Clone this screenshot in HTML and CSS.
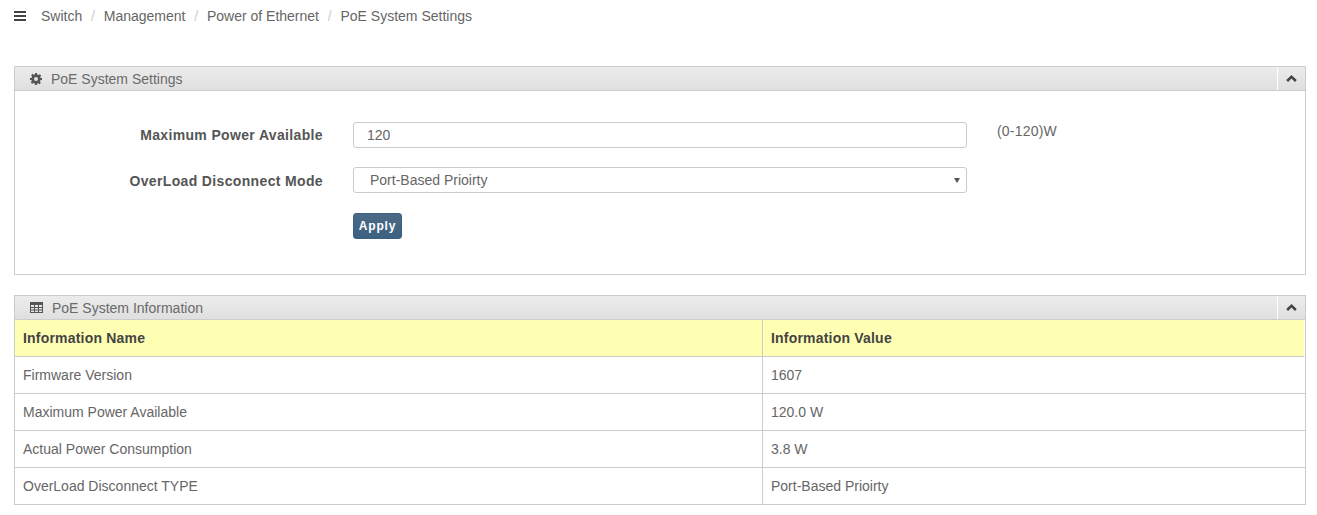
FILE: index.html
```html
<!DOCTYPE html>
<html lang="en">
<head>
<meta charset="utf-8">
<title>PoE System Settings</title>
<link rel="stylesheet" href="styles.css">
</head>
<body>
<nav class="crumbs">
  <svg class="menu-icon" viewBox="0 0 12 10" width="12" height="10"><path d="M0 0h12v2H0zM0 4h12v2H0zM0 8h12v2H0z"/></svg>
  <span class="crumb">Switch</span><span class="sep">/</span>
  <span class="crumb">Management</span><span class="sep">/</span>
  <span class="crumb">Power of Ethernet</span><span class="sep">/</span>
  <span class="crumb">PoE System Settings</span>
</nav>
<section class="panel first">
  <header class="panel-head">
    <svg class="head-icon gear" viewBox="0 0 24 24" width="12" height="12"><path fill-rule="evenodd" d="M10 0h4l.7 3.4 2 .8 2.9-1.9 2.8 2.8-1.9 2.9.8 2L24 10v4l-3.400.7-.8 2 1.900 2.900-2.800 2.800-2.900-1.900-2 .8L14 24h-4l-.7-3.400-2-.8-2.900 1.900-2.800-2.800 1.900-2.900-.8-2L0 14v-4l3.400-.7.8-2-1.900-2.900 2.800-2.800 2.900 1.900 2-.8zM12 8a4 4 0 1 0 0 8 4 4 0 0 0 0-8z"/></svg>
    <span class="head-title">PoE System Settings</span>
    <button class="collapse" type="button" aria-label="Collapse"><svg viewBox="0 0 12 8" width="11" height="7"><path d="M6 0l6 5.6L10 8 6 4 2 8 0 5.6z"/></svg></button>
  </header>
  <form class="form">
    <div class="row">
      <label class="label">Maximum Power Available</label>
      <input class="control text" type="text" value="120">
      <span class="hint">(0-120)W</span>
    </div>
    <div class="row">
      <label class="label low">OverLoad Disconnect Mode</label>
      <div class="control select"><span>Port-Based Prioirty</span><i class="arrow"></i></div>
    </div>
    <div class="row actions">
      <button class="apply" type="button">Apply</button>
    </div>
  </form>
</section>
<section class="panel">
  <header class="panel-head">
    <svg class="head-icon grid" viewBox="0 0 13 11" width="13" height="11"><path fill-rule="evenodd" d="M0 0h13v11H0zM1 3v2h3V3zm4 0v2h3V3zm4 0v2h3V3zM1 6v1.500h3V6zm4 0v1.500h3V6zm4 0v1.500h3V6zM1 8.500V10h3V8.500zm4 0V10h3V8.500zm4 0V10h3V8.500z"/></svg>
    <span class="head-title">PoE System Information</span>
    <button class="collapse" type="button" aria-label="Collapse"><svg viewBox="0 0 12 8" width="11" height="7"><path d="M6 0l6 5.6L10 8 6 4 2 8 0 5.6z"/></svg></button>
  </header>
  <table class="info">
    <thead><tr><th>Information Name</th><th>Information Value</th></tr></thead>
    <tbody>
      <tr><td>Firmware Version</td><td>1607</td></tr>
      <tr><td>Maximum Power Available</td><td>120.0 W</td></tr>
      <tr><td>Actual Power Consumption</td><td>3.8 W</td></tr>
      <tr><td>OverLoad Disconnect TYPE</td><td>Port-Based Prioirty</td></tr>
    </tbody>
  </table>
</section>
</body>
</html>
```
FILE: styles.css
```css
* { box-sizing: border-box; }
body {
  margin: 0;
  padding: 0 11px 0 14px;
  background: #fff;
  color: #666;
  font: 14px/18px "Liberation Sans", Arial, sans-serif;
}
.crumbs {
  display: flex;
  align-items: center;
  height: 32px;
  margin-bottom: 34px;
}
.menu-icon { fill: #444; margin-right: 15px; }
.sep { color: #ccc; margin: 0 8.8px; }
.panel { border: 1px solid #ccc; }
.panel.first { height: 209px; margin-bottom: 20px; }
.panel-head {
  display: flex;
  align-items: center;
  height: 24px;
  padding-left: 15px;
  background: linear-gradient(#ececec, #dfdfdf);
  border-bottom: 1px solid #ccc;
}
.head-icon { fill: #555; flex: none; }
.gear { margin-right: 9px; }
.grid { margin-right: 9px; }
.head-title { flex: 1; color: #6a6a6a; }
.collapse {
  width: 28px;
  height: 23px;
  padding: 0;
  background: none;
  border: 0;
  border-left: 1px solid #fff;
  display: flex;
  align-items: center;
  justify-content: center;
}
.collapse svg { fill: #444; }
.form { padding-top: 31px; }
.row { display: flex; align-items: flex-start; margin-bottom: 19px; }
.label {
  width: 308px;
  height: 26px;
  margin-right: 30px;
  text-align: right;
  color: #555;
  font-weight: bold;
  line-height: 26px;
  letter-spacing: 0.35px;
}
.label.low { padding-top: 1px; }
.control {
  width: 614px;
  height: 26px;
  border: 1px solid #ccc;
  border-radius: 3px;
  background: #fff;
  color: #666;
  font: inherit;
}
.text { padding: 0 13px; }
.select {
  position: relative;
  padding-left: 16px;
  line-height: 25px;
}
.arrow {
  position: absolute;
  right: 6px;
  top: 10px;
  border: 3.5px solid transparent;
  border-top: 5px solid #555;
  border-bottom: 0;
}
.hint { margin-left: 30px; line-height: 18px; letter-spacing: 0.2px; }
.actions { padding-left: 338px; margin: 20px 0 0; }
.apply {
  width: 49px;
  height: 26px;
  padding: 0;
  border: 1px solid #3c5f7f;
  border-radius: 3px;
  background: linear-gradient(#4b6a86, #3d6182);
  color: #fff;
  font: bold 12px "Liberation Sans", Arial, sans-serif;
  letter-spacing: 0.8px;
}
.info { width: 100%; border-collapse: separate; border-spacing: 0; table-layout: fixed; }
.info th, .info td {
  height: 37px;
  padding: 0 8px;
  text-align: left;
  border-bottom: 1px solid #ccc;
}
.info td + td, .info th + th { border-left: 1px solid #ccc; }
.info tr > :first-child { width: 747px; }
.info th { background: #ffffb3; color: #444; font-weight: bold; letter-spacing: 0.2px; }
.info th + th { border-right: 1px solid #fff; }
.info tbody tr:last-child td { border-bottom: 0; height: 36px; }
```
